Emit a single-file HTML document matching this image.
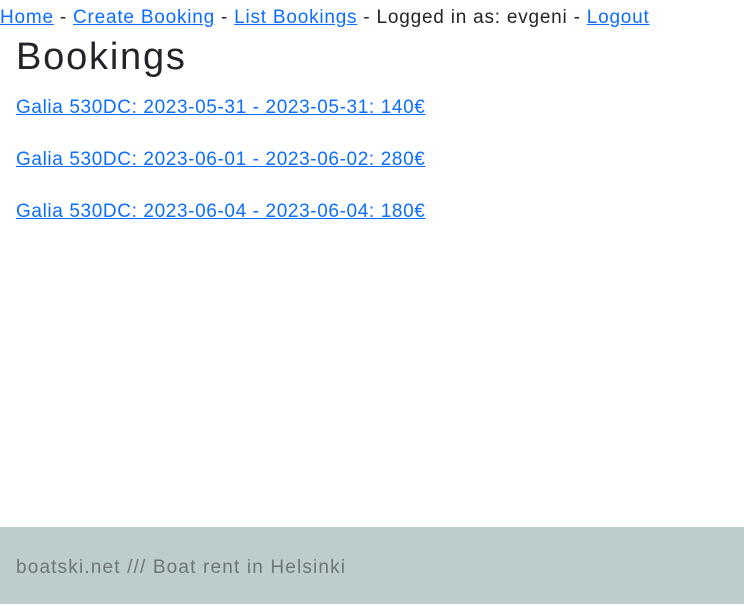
<!DOCTYPE html>
<html><head><meta charset="utf-8"><style>
html,body{margin:0;padding:0;background:#fff;width:744px;height:606px;overflow:hidden;position:relative;font-family:"Liberation Sans","DejaVu Sans",sans-serif;color:#212529}
a{color:#0d6efd;text-decoration:underline}
.nav{position:absolute;left:0;top:6px;font-size:19px;line-height:24px;white-space:nowrap;letter-spacing:0.78px}
h1{position:absolute;left:16px;top:34px;margin:0;font-size:38px;font-weight:500;line-height:46px;letter-spacing:1.8px}
.b{position:absolute;left:16px;font-size:19px;line-height:24px;white-space:nowrap;letter-spacing:0.62px}
.f{position:absolute;left:0;top:527px;width:744px;height:77px;background:#bdcccc}
.f span{position:absolute;left:16px;top:29px;font-size:19px;line-height:24px;color:#6c757d;letter-spacing:1.16px}
</style></head><body>
<div class="nav"><a href="#">Home</a> - <a href="#">Create Booking</a> - <a href="#">List Bookings</a> - Logged in as: evgeni - <a href="#">Logout</a></div>
<h1>Bookings</h1>
<div class="b" style="top:96px"><a href="#">Galia 530DC: 2023-05-31 - 2023-05-31: 140€</a></div>
<div class="b" style="top:148px"><a href="#">Galia 530DC: 2023-06-01 - 2023-06-02: 280€</a></div>
<div class="b" style="top:200px"><a href="#">Galia 530DC: 2023-06-04 - 2023-06-04: 180€</a></div>
<div class="f"><span>boatski.net /// Boat rent in Helsinki</span></div>
</body></html>
